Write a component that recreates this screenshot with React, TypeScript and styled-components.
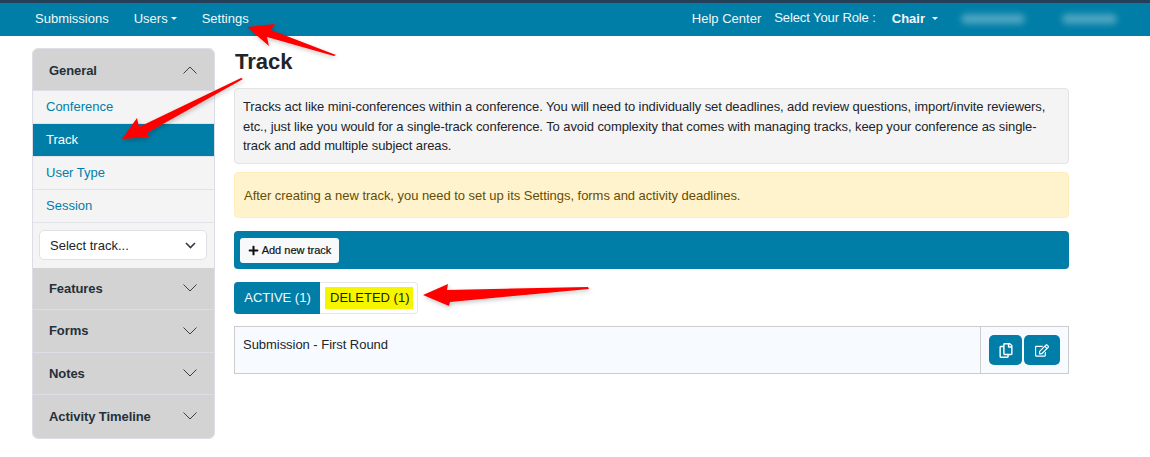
import React from "react";
import styled, { createGlobalStyle } from "styled-components";
import { FaRegCopy, FaRegEdit, FaPlus } from "react-icons/fa";

const Global = createGlobalStyle`
  html, body { margin: 0; padding: 0; background: #fff; }
  body { font-family: "Liberation Sans", Arial, sans-serif; font-size: 13px; color: #212529; }
  * { box-sizing: border-box; }
`;

const Page = styled.div`
  position: relative;
  width: 1150px;
  height: 457px;
  overflow: hidden;
`;

const TopBar = styled.header`
  height: 36px;
  background: #007ea7;
  border-top: 3px solid #234058;
  display: flex;
  align-items: center;
  color: #fff;
  font-size: 13px;
  padding: 0 33px 2px 35px;
`;

const NavLink = styled.span<{ $gap?: number }>`
  margin-right: ${(p) => p.$gap ?? 0}px;
  color: #f1f7fa;
  white-space: nowrap;
  display: inline-flex;
  align-items: center;
`;

const Caret = styled.i`
  display: inline-block;
  margin-left: 3px;
  border-top: 3px solid #fff;
  border-left: 3px solid transparent;
  border-right: 3px solid transparent;
`;

const RightNav = styled.div`
  margin-left: auto;
  display: flex;
  align-items: center;
`;

const RoleLabel = styled.span`
  margin: -2px 16px 0 13px;
  color: #f1f7fa;
  letter-spacing: -0.1px;
`;

const RoleValue = styled.span`
  font-weight: 700;
  display: inline-flex;
  align-items: center;
  color: #f1f7fa;
`;

const RoleCaret = styled(Caret)`
  margin-left: 7px;
`;

const Blurred = styled.span<{ $w: number; $ml: number }>`
  display: inline-block;
  width: ${(p) => p.$w}px;
  height: 10px;
  margin-left: ${(p) => p.$ml}px;
  background: rgba(255, 255, 255, 0.3);
  border-radius: 5px;
  filter: blur(3px);
`;

const Body = styled.div`
  display: flex;
  align-items: flex-start;
  padding: 12px 0 0 32px;
`;

const Sidebar = styled.aside`
  width: 183px;
  flex: none;
  border: 1px solid #dcdde6;
  border-radius: 6px;
  overflow: hidden;
  background: #f4f4f5;
`;

const GroupHead = styled.div<{ $last?: boolean; $first?: boolean }>`
  height: ${(p) => (p.$first ? 42 : 42.5)}px;
  padding: ${(p) => (p.$first ? "1px" : "0")} 17px 0 16px;
  background: #d3d3d3;
  display: flex;
  align-items: center;
  justify-content: space-between;
  font-weight: 700;
  font-size: 13px;
  letter-spacing: -0.08px;
  color: #25303a;
  border-bottom: ${(p) => (p.$last ? "none" : "1px solid #dcdde6")};
`;

const SideItem = styled.div<{ $active?: boolean }>`
  height: 33px;
  padding: 0 13px 2px;
  display: flex;
  align-items: center;
  border-bottom: 1px solid #e2e3e8;
  background: ${(p) => (p.$active ? "#007ea7" : "#f4f4f5")};
  color: ${(p) => (p.$active ? "#fff" : "#007ea7")};
`;

const SelectWrap = styled.div`
  height: 44.5px;
  padding: 7px 7px 0 6px;
`;

const SelectBox = styled.div`
  height: 30px;
  border: 1px solid #dee2e6;
  border-radius: 5px;
  background: #fff;
  display: flex;
  align-items: center;
  justify-content: space-between;
  padding: 0 10px;
  color: #212529;
`;

const Main = styled.main`
  width: 835px;
  margin-left: 19px;
`;

const Title = styled.h1`
  margin: 0;
  height: 40px;
  font-size: 22px;
  line-height: 27px;
  font-weight: 700;
  color: #212529;
  padding-left: 1px;
`;

const InfoBox = styled.div`
  height: 76px;
  padding: 8px;
  background: #f4f4f5;
  border: 1px solid #e3e3e6;
  border-radius: 4px;
  line-height: 19.6px;
  color: #212529;
  letter-spacing: -0.09px;
`;

const Alert = styled.div`
  margin-top: 8px;
  height: 46px;
  padding: 0 8px 0 9px;
  display: flex;
  align-items: center;
  background: #fff3cd;
  border: 1px solid #ffeeba;
  border-radius: 4px;
  color: #664d03;
  letter-spacing: -0.04px;
`;

const Toolbar = styled.div`
  margin-top: 13px;
  height: 38px;
  background: #007ea7;
  border-radius: 4px;
  display: flex;
  align-items: center;
  padding: 0 6px;
`;

const AddButton = styled.div`
  height: 25px;
  width: 99px;
  background: #f8f9fa;
  border-radius: 3px;
  display: flex;
  align-items: center;
  justify-content: center;
  gap: 3px;
  font-size: 11px;
  color: #111;
  -webkit-text-stroke: 0.2px #111;
  svg { width: 11px; height: 11px; }
`;

const Tabs = styled.div`
  margin-top: 13px;
  height: 32px;
  width: 184px;
  display: flex;
  border-radius: 4px;
  border: 1px solid #e8e8e8;
  border-left: none;
`;

const ActiveTab = styled.div`
  width: 86px;
  background: #007ea7;
  color: #f4fafc;
  border-radius: 4px 0 0 4px;
  margin: -1px 0;
  padding: 0 0 2px 1px;
  display: flex;
  align-items: center;
  justify-content: center;
`;

const OtherTab = styled.div`
  flex: 1;
  display: flex;
  align-items: center;
  padding: 0 0 0 5px;
`;

const Highlight = styled.span`
  background: #f5f500;
  color: #1e1e00;
  height: 22px;
  padding: 0 4px 2px 5px;
  white-space: nowrap;
  display: inline-flex;
  align-items: center;
`;

const Row = styled.div`
  margin-top: 12px;
  height: 48px;
  display: flex;
  background: #f7fbff;
  border: 1px solid #cccccc;
`;

const RowName = styled.div`
  flex: 1;
  padding: 10px 8px;
  line-height: 16px;
  color: #212529;
  letter-spacing: -0.04px;
`;

const RowActions = styled.div`
  width: 88px;
  border-left: 1px solid #cccccc;
  display: flex;
  gap: 2px;
  align-items: flex-start;
  padding: 8px 0 0 8px;
`;

const IconButton = styled.div<{ $w: number }>`
  width: ${(p) => p.$w}px;
  height: 30px;
  background: #007ea7;
  border-radius: 5px;
  display: flex;
  align-items: center;
  justify-content: center;
  color: #fff;
  svg { width: 14px; height: 15px; }
`;

const Overlay = styled.svg`
  position: absolute;
  left: 0;
  top: 0;
  pointer-events: none;
`;

const Chevron = ({ up }: { up?: boolean }) => (
  <svg width={14} height={8} viewBox="0 0 14 8" fill="none">
    <path d={up ? "M0.5 7.5 L7 1 L13.5 7.5" : "M0.5 0.5 L7 7 L13.5 0.5"} stroke="#25303a" strokeWidth="0.9" />
  </svg>
);

const groups = ["Features", "Forms", "Notes", "Activity Timeline"];

export default function App() {
  return (
    <Page>
      <Global />
      <TopBar>
        <NavLink $gap={25}>Submissions</NavLink>
        <NavLink $gap={25}>Users<Caret /></NavLink>
        <NavLink>Settings</NavLink>
        <RightNav>
          <NavLink>Help Center</NavLink>
          <RoleLabel>Select Your Role :</RoleLabel>
          <RoleValue>Chair<RoleCaret /></RoleValue>
          <Blurred $w={64} $ml={23} />
          <Blurred $w={55} $ml={37} />
        </RightNav>
      </TopBar>
      <Body>
        <Sidebar>
          <GroupHead $first>General<Chevron up /></GroupHead>
          <SideItem>Conference</SideItem>
          <SideItem $active>Track</SideItem>
          <SideItem>User Type</SideItem>
          <SideItem>Session</SideItem>
          <SelectWrap>
            <SelectBox>
              Select track...
              <svg width="11" height="7" viewBox="0 0 11 7" fill="none">
                <path d="M1 1 L5.5 5.5 L10 1" stroke="#343a40" strokeWidth="1.6" />
              </svg>
            </SelectBox>
          </SelectWrap>
          {groups.map((g, i) => (
            <GroupHead key={g} $last={i === groups.length - 1}>{g}<Chevron /></GroupHead>
          ))}
        </Sidebar>
        <Main>
          <Title>Track</Title>
          <InfoBox>
            Tracks act like mini-conferences within a conference. You will need to individually set deadlines, add review questions, import/invite reviewers, etc., just like you would for a single-track conference. To avoid complexity that comes with managing tracks, keep your conference as single-track and add multiple subject areas.
          </InfoBox>
          <Alert>After creating a new track, you need to set up its Settings, forms and activity deadlines.</Alert>
          <Toolbar>
            <AddButton><FaPlus />Add new track</AddButton>
          </Toolbar>
          <Tabs>
            <ActiveTab>ACTIVE (1)</ActiveTab>
            <OtherTab><Highlight>DELETED (1)</Highlight></OtherTab>
          </Tabs>
          <Row>
            <RowName>Submission - First Round</RowName>
            <RowActions>
              <IconButton $w={33}><FaRegCopy /></IconButton>
              <IconButton $w={36}><FaRegEdit /></IconButton>
            </RowActions>
          </Row>
        </Main>
      </Body>
      <Overlay width="1150" height="457" viewBox="0 0 1150 457">
        <defs>
          <filter id="sh" x="-20%" y="-20%" width="140%" height="140%">
            <feDropShadow dx="1" dy="2" stdDeviation="2" floodColor="#000" floodOpacity="0.22" />
          </filter>
        </defs>
        <g fill="#ff0000" filter="url(#sh)">
          <polygon points="247,27 275,24 271,30 336,55 334,56 267,37 269,46" />
          <polygon points="122,139 137,118 139,127 241,78 243,79 147,133 149,137" />
          <polygon points="423,295 448,284 447,290 588,287 589,289 450,302 449,306" />
        </g>
      </Overlay>
    </Page>
  );
}
